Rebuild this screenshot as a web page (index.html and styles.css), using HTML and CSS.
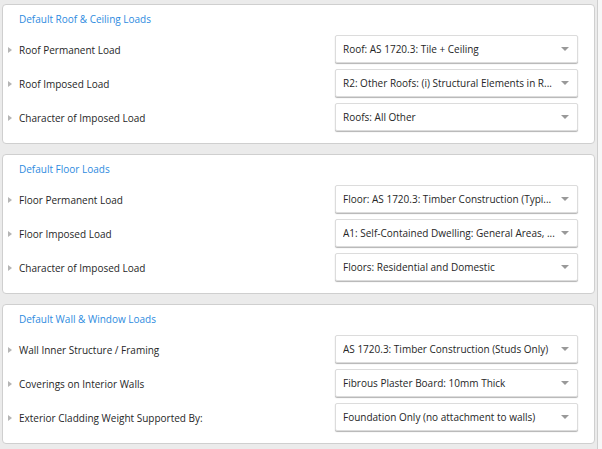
FILE: index.html
```html
<!DOCTYPE html>
<html>
<head>
<meta charset="utf-8">
<link rel="stylesheet" href="styles.css">
</head>
<body>
<div class="page">
  <div class="main">
    <section class="panel">
      <h2 class="panel-title">Default Roof &amp; Ceiling Loads</h2>
      <div class="row"><span class="caret"></span><span class="label">Roof Permanent Load</span><div class="select"><span class="value">Roof: AS 1720.3: Tile + Ceiling</span><span class="arrow"></span></div></div>
      <div class="row"><span class="caret"></span><span class="label">Roof Imposed Load</span><div class="select"><span class="value">R2: Other Roofs: (i) Structural Elements in R...</span><span class="arrow"></span></div></div>
      <div class="row"><span class="caret"></span><span class="label">Character of Imposed Load</span><div class="select"><span class="value">Roofs: All Other</span><span class="arrow"></span></div></div>
    </section>
    <section class="panel">
      <h2 class="panel-title">Default Floor Loads</h2>
      <div class="row"><span class="caret"></span><span class="label">Floor Permanent Load</span><div class="select"><span class="value">Floor: AS 1720.3: Timber Construction (Typi...</span><span class="arrow"></span></div></div>
      <div class="row"><span class="caret"></span><span class="label">Floor Imposed Load</span><div class="select"><span class="value">A1: Self-Contained Dwelling: General Areas, ...</span><span class="arrow"></span></div></div>
      <div class="row"><span class="caret"></span><span class="label">Character of Imposed Load</span><div class="select"><span class="value">Floors: Residential and Domestic</span><span class="arrow"></span></div></div>
    </section>
    <section class="panel">
      <h2 class="panel-title">Default Wall &amp; Window Loads</h2>
      <div class="row"><span class="caret"></span><span class="label">Wall Inner Structure / Framing</span><div class="select"><span class="value">AS 1720.3: Timber Construction (Studs Only)</span><span class="arrow"></span></div></div>
      <div class="row"><span class="caret"></span><span class="label">Coverings on Interior Walls</span><div class="select"><span class="value">Fibrous Plaster Board: 10mm Thick</span><span class="arrow"></span></div></div>
      <div class="row"><span class="caret"></span><span class="label">Exterior Cladding Weight Supported By:</span><div class="select"><span class="value">Foundation Only (no attachment to walls)</span><span class="arrow"></span></div></div>
    </section>
  </div>
  <div class="scroll-edge"></div>
</div>
</body>
</html>
```
FILE: styles.css
```css
* { box-sizing: border-box; }
html, body { margin: 0; padding: 0; }
body {
  background: #ebebeb;
  font-family: "Open Sans", "Noto Sans", sans-serif;
  font-size: 10px;
  color: #262626;
  width: 602px;
  height: 449px;
  overflow: hidden;
}
.page {
  display: flex;
  height: 449px;
}
.main {
  width: 597px;
  padding: 4px 2px 0 2px;
  display: flex;
  flex-direction: column;
  gap: 10px;
}
.scroll-edge {
  width: 5px;
  border-left: 1px solid #cfcfcf;
  background: #f7f7f7;
}
.panel {
  width: 593px;
  height: 140px;
  background: #fff;
  border: 1px solid #cfcfcf;
  border-radius: 4px;
  padding: 6px 16px 0 5px;
  display: flex;
  flex-direction: column;
  gap: 6px;
}
.panel-title {
  margin: 0 0 2px 0;
  padding-left: 11px;
  font-size: 10px;
  font-weight: normal;
  line-height: 16px;
  color: #2e8be0;
}
.row {
  display: flex;
  align-items: center;
  height: 28px;
}
.caret {
  width: 0;
  height: 0;
  border-left: 4px solid #b5b5b5;
  border-top: 3.5px solid transparent;
  border-bottom: 3.5px solid transparent;
  margin: 1px 7px 0 0;
}
.label {
  flex: 1;
  white-space: nowrap;
  padding-top: 1px;
  color: #262626;
}
.select {
  width: 243px;
  height: 28px;
  border: 1px solid #dcdcdc;
  border-radius: 2px;
  box-shadow: 0 1px 1px rgba(0, 0, 0, 0.3);
  display: flex;
  align-items: center;
  padding: 0 8px 0 7px;
  background: #fff;
}
.value {
  flex: 1;
  min-width: 0;
  white-space: nowrap;
  overflow: hidden;
  text-overflow: ellipsis;
  color: #262626;
  padding-right: 6px;
}
.arrow {
  flex: none;
  width: 0;
  height: 0;
  border-top: 4px solid #999;
  border-left: 4px solid transparent;
  border-right: 4px solid transparent;
}
```
